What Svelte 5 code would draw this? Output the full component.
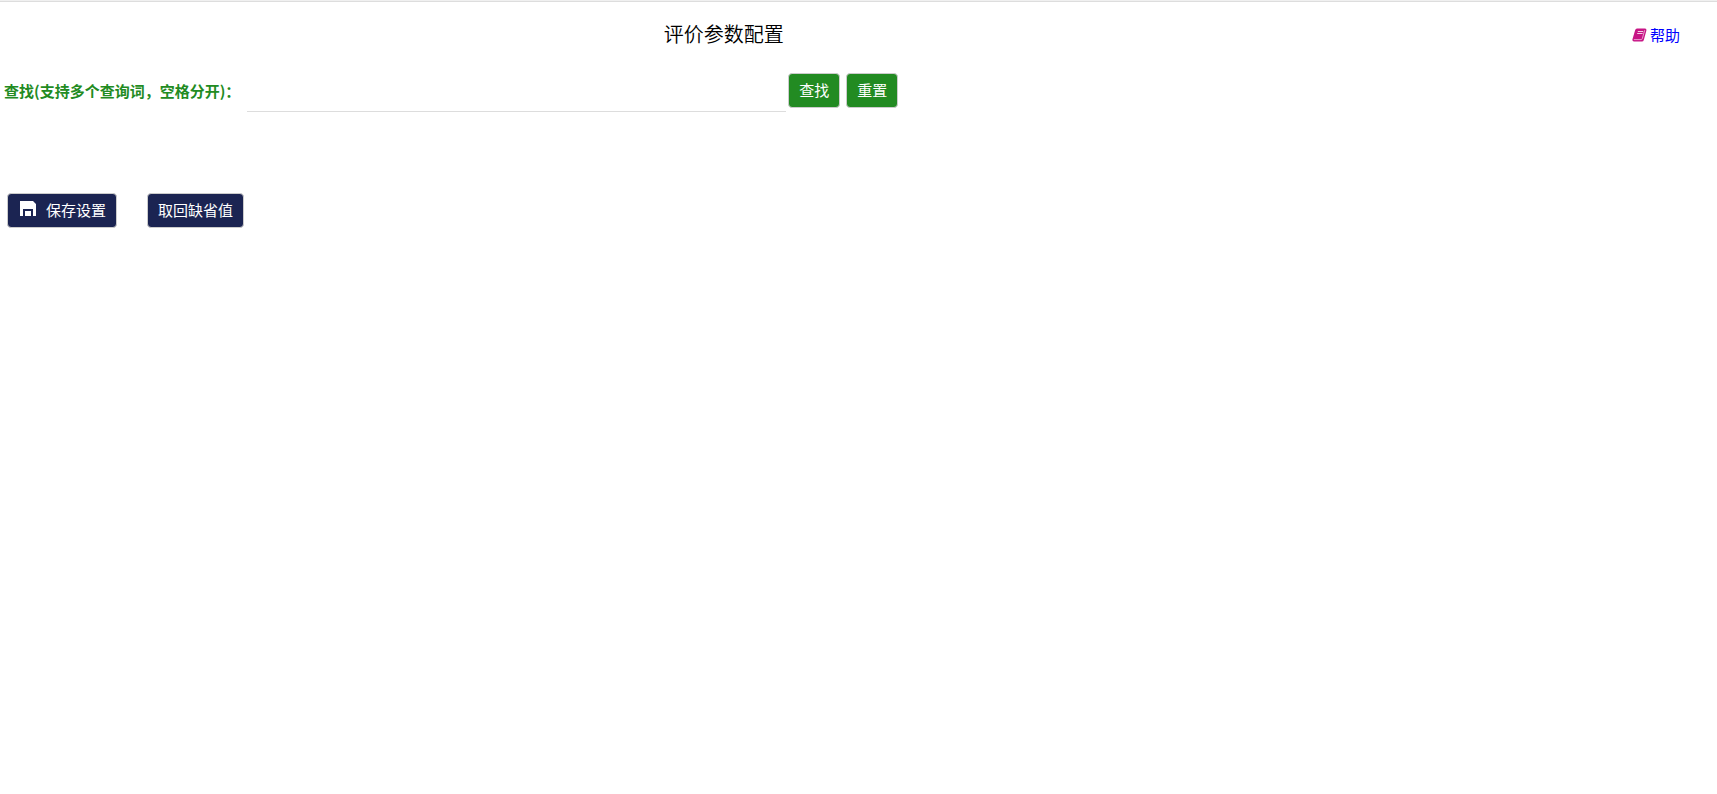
<script lang="ts">
	let keywords = $state('');

	function reset() {
		keywords = '';
	}
</script>

<div class="page">
	<header>
		<h1>评价参数配置</h1>
		<a class="help" href="#help">
			<svg width="15" height="14" viewBox="0 0 15 14" aria-hidden="true">
				<path d="M5 0.5H13Q14.8 0.8 14.4 2.4L11.8 12Q11.4 13.5 9.8 13.5H2Q0.2 13.3 0.4 11.4L3.2 2Q3.6 0.6 5 0.5Z" fill="#c71585" />
				<path d="M5.8 3.5H11.2M5.2 5.5H10.6" stroke="#fff" stroke-width="0.8" />
				<path d="M1.8 11.6H9.2Q10 11.5 10.3 10.6L12.7 2.2" fill="none" stroke="#f3bfdf" stroke-width="0.8" />
			</svg>
			<span>帮助</span>
		</a>
	</header>

	<form class="search" onsubmit={(e) => e.preventDefault()}>
		<label for="keywords">查找(支持多个查询词，空格分开)：</label>
		<input id="keywords" type="text" bind:value={keywords} />
		<button class="green" type="submit">查找</button>
		<button class="green reset" type="button" onclick={reset}>重置</button>
	</form>

	<div class="actions">
		<button class="navy" type="button">
			<svg class="save" width="16" height="15" viewBox="0 0 16 15" aria-hidden="true">
				<path fill="#fff" d="M0 0H13L16 3V15H13V8H3V15H0Z" />
				<path fill="#fff" d="M5 10H11V15H5Z" />
			</svg>
			<span>保存设置</span>
		</button>
		<button class="navy" type="button">取回缺省值</button>
	</div>
</div>

<style>
	:global(body) {
		background: #fff;
	}

	.page {
		border-top: 1px solid #f0f0f0;
		font-family: 'Noto Sans CJK SC', sans-serif;
		font-size: 15px;
		line-height: 20px;
		color: #000;
	}

	header {
		display: flex;
		align-items: center;
		height: 64px;
		border-top: 1px solid #ddd;
	}

	h1 {
		width: 84.3%;
		margin: 0;
		font-size: 20px;
		font-weight: 350;
		line-height: 28px;
		text-align: center;
	}

	.help {
		display: flex;
		align-items: center;
		gap: 3px;
		margin-left: auto;
		margin-right: 37px;
		padding-top: 2px;
		color: #00f;
		text-decoration: none;
	}

	.search {
		display: flex;
		align-items: center;
		height: 49px;
		padding-left: 4px;
	}

	label {
		flex-shrink: 0;
		margin-right: 7px;
		color: #228b22;
		font-weight: bold;
		white-space: nowrap;
	}

	input {
		box-sizing: border-box;
		width: 539px;
		height: 43px;
		margin-right: 2px;
		padding: 0 4px;
		border: 0;
		border-bottom: 1px solid #ddd;
		outline: 0;
		background: transparent;
		font: inherit;
	}

	button {
		display: flex;
		align-items: center;
		box-sizing: border-box;
		height: 35px;
		padding: 0 10px 1px;
		border: 1px solid #ccc;
		border-radius: 4px;
		color: #fff;
		font: inherit;
		white-space: nowrap;
		cursor: pointer;
	}

	.green {
		background: #228b22;
	}

	.reset {
		margin-left: 6px;
	}

	.navy {
		background: #1b2452;
	}

	.save {
		margin: 0 10px 4px 2px;
	}

	.actions {
		display: flex;
		gap: 30px;
		margin-top: 78px;
		padding-left: 7px;
	}
</style>
